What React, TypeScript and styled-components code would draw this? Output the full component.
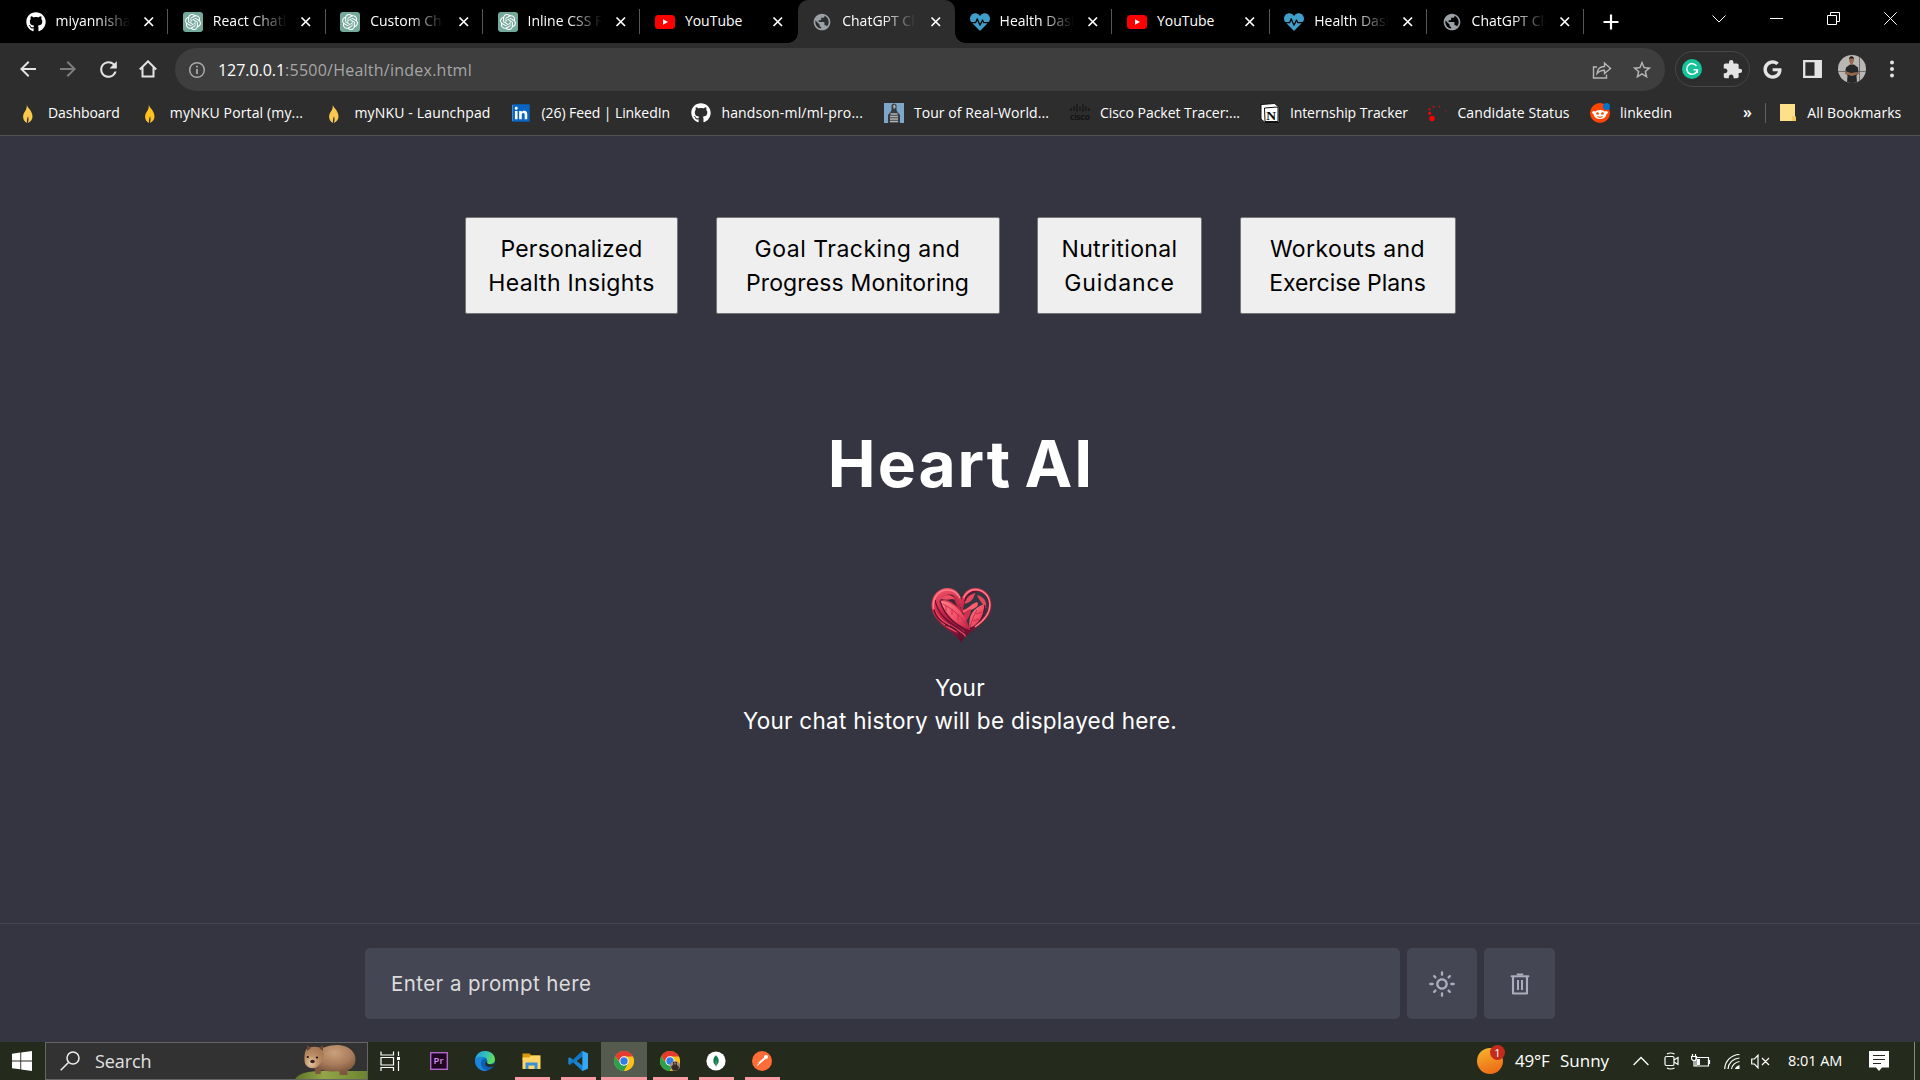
import React from "react";
import styled, { createGlobalStyle, css } from "styled-components";
import { FaGithub, FaHeartbeat, FaGoogle, FaLinkedin } from "react-icons/fa";
import { MdExtension, MdPublic, MdArrowBack, MdArrowForward, MdRefresh, MdStarBorder, MdOutlineLightMode } from "react-icons/md";
import { SiOpenai, SiMongodb } from "react-icons/si";

const Global = createGlobalStyle`
  *, *::before, *::after { box-sizing: border-box; }
  body { margin: 0; background: #343541; overflow: hidden; }
  svg { display: block; flex: none; }
`;
const ui = '"Open Sans", "Noto Sans", sans-serif';
const pageFont = 'Inter, "Open Sans", sans-serif';

const Screen = styled.div`
  width: 1920px; height: 1080px; display: flex; flex-direction: column;
  background: #343541; font-family: ${ui}; overflow: hidden;
`;

/* ---------- tab strip ---------- */
const TabStrip = styled.div`
  height: 43px; background: #000; display: flex; padding-left: 11px; flex: none;
`;
const Tab = styled.div<{ $active?: boolean; $line?: boolean }>`
  position: relative; width: 157.350px; height: 43px; flex: none; display: flex; align-items: center;
  padding: 0 0 0 14.500px; color: #fff; font-size: 14px;
  ${(p) => p.$line && css`
    &::after { content: ""; position: absolute; right: 0; top: 9px; width: 1px; height: 25px; background: #55565a; }
  `}
  ${(p) => p.$active && css`
    background: #2d2d2d; border-radius: 10px 10px 0 0;
    &::before, &::after { content: ""; position: absolute; bottom: 0; width: 10px; height: 10px; }
    &::before { left: -10px; background: radial-gradient(circle at 0 0, #000 9.5px, #2d2d2d 10px); }
    &::after { right: -10px; background: radial-gradient(circle at 100% 0, #000 9.5px, #2d2d2d 10px); }
  `}
`;
const TabTitle = styled.span<{ $fade: boolean }>`
  margin-left: 10px; width: 74px; overflow: hidden; white-space: nowrap; line-height: 20px; margin-top: -1px;
  ${(p) => p.$fade && css`mask-image: linear-gradient(90deg, #000 54%, transparent 100%);`}
`;
const CloseX = styled.span`margin-left: 13.500px; color: #fff;`;
const NewTab = styled.div`width: 54px; display: flex; align-items: center; justify-content: center;`;
const WindowControls = styled.div`margin-left: auto; height: 37px; display: flex; margin-right: 1.500px;`;
const WinBtn = styled.div`width: 57px; display: flex; align-items: center; justify-content: center;`;

const GptTile = styled.span`
  width: 20px; height: 20px; border-radius: 3px; background: #75a99c; color: #fff; flex: none;
  display: flex; align-items: center; justify-content: center;
`;

const Gpt = () => <GptTile><SiOpenai size={16} /></GptTile>;
const YouTube = () => (
  <svg width="20" height="20" viewBox="0 0 20 20"><rect y="3" width="20" height="14" rx="3.5" fill="#f00" /><path d="M8 7.2v5.6l5-2.8z" fill="#fff" /></svg>
);
const Globe = () => <MdPublic size={20} color="#9aa0a6" />;
const Health = () => <FaHeartbeat size={20} color="#3f9fca" />;

type TabInfo = { title: string; icon: React.ReactNode; active?: boolean; line?: boolean };
const tabs: TabInfo[] = [
  { title: "miyannisha", icon: <FaGithub size={20} color="#fff" />, line: true },
  { title: "React Chatbot", icon: <Gpt />, line: true },
  { title: "Custom Chat", icon: <Gpt />, line: true },
  { title: "Inline CSS Fix", icon: <Gpt />, line: true },
  { title: "YouTube", icon: <YouTube /> },
  { title: "ChatGPT Clone", icon: <Globe />, active: true },
  { title: "Health Dashboard", icon: <Health />, line: true },
  { title: "YouTube", icon: <YouTube />, line: true },
  { title: "Health Dashboard", icon: <Health />, line: true },
  { title: "ChatGPT Clone", icon: <Globe />, line: true },
];

/* ---------- toolbar ---------- */
const Toolbar = styled.div`
  height: 53px; background: #2d2d2d; display: flex; align-items: center; padding: 0 8px 1px; flex: none; color: #e3e3e3;
`;
const ToolBtn = styled.div<{ $dim?: boolean }>`
  width: 40px; height: 40px; display: flex; align-items: center; justify-content: center; color: ${(p) => (p.$dim ? "#7d7d7d" : "#e3e3e3")};
`;
const Omnibox = styled.div`
  width: 1490px; height: 43px; border-radius: 22px; background: #3e3e3e; margin: 1px 0 0 7px;
  display: flex; align-items: center; padding: 0 14px 0 13px; color: #a9a9a9;
`;
const Url = styled.div`
  flex: 1; margin-left: 12px; font-size: 16px; letter-spacing: 0.240px; color: #a6a6a6; line-height: 24px;
  b { font-weight: 400; color: #fff; letter-spacing: -0.050px; }
`;
const OmniIcon = styled.span`width: 20px; margin-left: 19px; color: #b7b7b7;`;
const ExtensionPill = styled.div`
  width: 75px; height: 36px; border: 1px solid #474747; border-radius: 18px; margin-left: 10px; margin-right: 2px;
  display: flex; align-items: center; justify-content: space-between; padding: 0 6px;
`;
const Grammarly = styled.span`
  width: 20px; height: 20px; border-radius: 50%; background: #15c39a; display: flex; align-items: center; justify-content: center;
`;

/* ---------- bookmarks ---------- */
const Bookmarks = styled.div`
  height: 40px; background: #2d2d2d; border-bottom: 1px solid #505055; display: flex; align-items: center;
  padding: 0 0 5px 18px; flex: none; color: #fff; font-size: 14px; white-space: nowrap;
`;
const Bookmark = styled.div<{ $w: number; $ls: number }>`
  width: ${(p) => p.$w}px; display: flex; align-items: center; letter-spacing: ${(p) => p.$ls}px; flex: none; line-height: 20px;
  > svg { margin-right: 10px; }
`;
const Overflow = styled.div`width: 22.400px; font-size: 16px; line-height: 20px; font-weight: 600; padding-bottom: 3px;`;
const BarLine = styled.div`width: 1px; height: 20px; background: #606060; margin: 0 14px 0 0;`;

const Flame = ({ c }: { c: string }) => (
  <svg width="20" height="20" viewBox="0 0 20 20">
    <path d="M8.800 0c-.3 2 .5 3.500 2.400 5.800 1.600 2 3.300 4.500 3.300 7.600 0 3-1.500 5-4.700 6.600.9-2.600 1-4.600.2-6.800-.7 2-1.300 3.800-1 6.800C6.300 18.700 4.900 16.400 5.100 13c.2-3 2.300-4.600 3.100-6.800C9 4 8.900 2 8.800 0z" fill={c} />
  </svg>
);
const LinkedIn = () => (
  <svg width="20" height="20" viewBox="0 0 20 20"><rect x="1" y="2" width="16" height="16" fill="#fff" /><FaLinkedin size={20} color="#0a66c2" /></svg>
);
const Mural = () => (
  <svg width="20" height="20" viewBox="0 0 20 20">
    <rect width="20" height="20" fill="#7ea6c6" /><path d="M7.500 2Q10-1 12.500 2v5l1 2 2.500 3v8H4v-8l2.500-3 1-2z" fill="#343c46" />
    <path d="M9 3.500l1.500-1 .5 1.500-1.500 1.500M6.500 11h7M6 13.500h8M6 16h8M6 18.500h8" stroke="#b7b5ad" strokeWidth="1.300" fill="none" />
  </svg>
);
const Cisco = () => (
  <svg width="20" height="20" viewBox="0 0 20 20">
    <path d="M1 5v3M4 3v5M7 1v8M10 4v4M13 1v8M16 3v5M19 5v3" stroke="#151515" strokeWidth="1.200" />
    <text x="0" y="16.500" textLength="20" fontSize="9" fontWeight="700" fontFamily="Open Sans" fill="#151515">cisco</text>
  </svg>
);
const Notion = () => (
  <svg width="20" height="20" viewBox="0 0 20 20">
    <path d="M1 1.500L14.500.5 19 4v15.500H5L1 16z" fill="#fff" stroke="#111" strokeWidth="1" /><path d="M4.500 5L18 4v14.500H5z" fill="#fff" stroke="#111" />
    <text x="6.200" y="16.500" fontSize="13.500" fontWeight="700" fontFamily="Liberation Serif" fill="#000">N</text>
  </svg>
);
const RedDots = () => (
  <svg width="20" height="20" viewBox="0 0 20 20" fill="#f00">
    <circle cx="5" cy="15.500" r="2.700" /><circle cx="2.600" cy="10.300" r="1.500" /><circle cx="2.600" cy="6.300" r="1.100" /><circle cx="6.500" cy="3.800" r=".9" /><circle cx="12.500" cy="3.800" r=".7" /><circle cx="18.500" cy="8" r=".6" />
  </svg>
);
const Reddit = () => (
  <svg width="20" height="20" viewBox="0 0 20 20">
    <circle cx="10" cy="10" r="10" fill="#ff4500" /><ellipse cx="10" cy="11.500" rx="6.300" ry="4.600" fill="#fff" /><circle cx="3.800" cy="9.500" r="1.600" fill="#fff" /><circle cx="16.200" cy="9.500" r="1.600" fill="#fff" />
    <circle cx="7.500" cy="10.500" r="1.300" fill="#ff4500" /><circle cx="12.500" cy="10.500" r="1.300" fill="#ff4500" /><path d="M7.300 13.600q2.700 1.700 5.400 0" stroke="#ff4500" fill="none" /><circle cx="16.500" cy="3.500" r="3.500" fill="#0072c9" />
  </svg>
);
const Folder = () => (
  <svg width="17" height="20" viewBox="0 0 17 20"><path d="M0 1h15v12l1 1v4H0z" fill="#ffe08a" /><path d="M12 18v-5l4 1v4z" fill="#f5c95a" /></svg>
);

const bookmarks: { t: string; w: number; ls: number; i: React.ReactNode }[] = [
  { t: "Dashboard", w: 121.8, ls: -0.06, i: <Flame c="#f9c94e" /> },
  { t: "myNKU Portal (my...", w: 184.7, ls: 0.14, i: <Flame c="#ffc220" /> },
  { t: "myNKU - Launchpad", w: 187, ls: 0.15, i: <Flame c="#f9c94e" /> },
  { t: "(26) Feed | LinkedIn", w: 179.9, ls: -0.08, i: <LinkedIn /> },
  { t: "handson-ml/ml-pro...", w: 192.5, ls: 0.18, i: <FaGithub size={20} /> },
  { t: "Tour of Real-World...", w: 186, ls: 0.08, i: <Mural /> },
  { t: "Cisco Packet Tracer:...", w: 190, ls: -0.03, i: <Cisco /> },
  { t: "Internship Tracker", w: 167.6, ls: -0.08, i: <Notion /> },
  { t: "Candidate Status", w: 162.5, ls: 0.08, i: <RedDots /> },
  { t: "linkedin", w: 153, ls: 0.08, i: <Reddit /> },
];

/* ---------- page ---------- */
const Page = styled.main`
  height: 906px; background: #343541; display: flex; flex-direction: column; align-items: center; padding-top: 81px; font-family: ${pageFont}; color: #fff;
`;
const Features = styled.div`display: flex; gap: 37.500px; padding-left: 0.500px;`;
const Feature = styled.button<{ $w: number }>`
  width: ${(p) => p.$w}px; height: 97px; padding: 1px 0 0; border: 1px solid #767676; border-radius: 2px; background: #efefef; color: #000;
  font: 400 23px/34px ${pageFont}; display: flex; flex-direction: column; align-items: center; justify-content: center;
`;
const Line = styled.span<{ $ls: number }>`letter-spacing: ${(p) => p.$ls}px; white-space: nowrap;`;
const Title = styled.h1`margin: 102px 0 75px; font-size: 64px; line-height: 96px; font-weight: 700; letter-spacing: 2px; word-spacing: -5px; padding-left: 2px;`;
const Message = styled.p`margin: 27px 0 0; font-size: 22.500px; line-height: 33px; text-align: center; letter-spacing: 0.270px;`;
const Composer = styled.div`
  width: 100%; height: 119px; margin-top: auto; border-top: 1px solid #444654; display: flex; justify-content: center; gap: 7px; padding-top: 24px;
`;
const Prompt = styled.textarea`
  width: 1035px; height: 71px; border: 0; border-radius: 5px; background: #444654; resize: none; outline: 0; overflow: hidden; display: block;
  font: 400 20.500px/30px ${pageFont}; letter-spacing: 0.430px; padding: 21px 26px; color: #fff;
  &::placeholder { color: #dcdcdc; opacity: 1; }
`;
const Action = styled.button<{ $w: number }>`
  width: ${(p) => p.$w}px; height: 71px; border: 0; border-radius: 5px; background: #444654; color: #acacbe; display: flex; align-items: center; justify-content: center; padding: 0;
`;

const features: { w: number; lines: [string, number][] }[] = [
  { w: 213, lines: [["Personalized", 0.15], ["Health Insights", 0.3]] },
  { w: 284, lines: [["Goal Tracking and", 0.5], ["Progress Monitoring", 0.15]] },
  { w: 165, lines: [["Nutritional", 0.37], ["Guidance", 0.9]] },
  { w: 216, lines: [["Workouts and", 0.4], ["Exercise Plans", -0.05]] },
];

const HeartBox = styled.div`padding-left: 3px;`;
const Heart = () => (
  <HeartBox><svg width="61" height="57" viewBox="0 0 61 57">
    <defs>
      <linearGradient id="h1" x1="0" y1="0" x2=".3" y2="1"><stop offset="0" stopColor="#f85a6c" /><stop offset=".5" stopColor="#c42246" /><stop offset="1" stopColor="#5c0f2c" /></linearGradient>
      <linearGradient id="h2" x1="0" y1="0" x2="1" y2="1"><stop offset="0" stopColor="#ff8088" /><stop offset=".6" stopColor="#f04a62" /><stop offset="1" stopColor="#b51c42" /></linearGradient>
      <clipPath id="hc"><path d="M30 56C26 45 1 38 .5 18.500.5 8 8 1 16.500 1 24 1 29 6 30.500 13 32 6 37 1 44.500 1 53 1 60.500 8 60.500 18.500 60.500 37 36 43 30 56z" /></clipPath>
    </defs>
    <g clipPath="url(#hc)">
      <rect width="61" height="57" fill="url(#h1)" />
      <path d="M33 16C34 8 39 4.500 46 4.500c7 1 12 6 12 13 0 9-8 17-18 24L31 30z" fill="#343541" />
      <path d="M9 14C13 6 22 5 27 13l3 9-7-5c-5-4-9-5-14-3z" fill="#3d2436" />
      <path d="M10 12c4-6 11-5 15 1l-4-1c-4 1-7 1-11 0z" fill="#f04b62" />
      <path d="M22 9c5 1 7 5 7 13-4-4-5-8-7-13z" fill="#c32b49" />
      <path d="M33.500 17c1-7 7-10 11-11-2 3-1 8-11 11z" fill="#e8485d" />
      <path d="M32 23c6-1 7-6 14-8 4 5-6 8-14 11z" fill="#ff5d6d" />
      <path d="M46 8c7 2 10 6 9 14-2-5-7-8-9-14z" fill="#e8485d" />
      <path d="M38.500 41C37 29 42 21 53 17c1 10-4 20-14.500 24z" fill="url(#h2)" />
      <path d="M32 31c0-6 4-8 8-9 0 5-3 10-6 13z" fill="#d0304e" />
      <path d="M9 14c13 0 24 10 30 29-5 0-22-8-30-29z" fill="url(#h2)" />
      <path d="M4 22c5 12 17 17 29 22l2 6C22 43 7 40 4 22z" fill="#f24f64" />
      <g fill="none" stroke="#65102f" strokeWidth="1.300">
        <path d="M9 14c5 16 16 24 29 30M4 13c3 16 14 22 31 34M3 23c4 14 19 16 30 26M14 38c8 1 14 6 17 14" />
        <path d="M39 42c7-3 14-9 15-24M34 14c1-6 6-10 12-10 7 0 12 6 12 14" />
      </g>
      <path d="M12 17c9 5 20 13 26 25M46 23c-3 5-6 12-7 18M15 19v5M21 22v6M27 27v6M45 27l6-2M42 34l6-2" stroke="#c4264a" strokeWidth=".9" fill="none" />
      <g fill="none" stroke="#ff7d86" strokeWidth="1.500">
        <path d="M2.500 22C1 10 8 3 16.500 3c6 0 10 3 12.500 8M32.500 11C36 4 40 2.500 45 2.800c8 .5 14 7 13.800 15.700 0 9-7 16-15 21.500" />
      </g>
    </g>
  </svg></HeartBox>
);
const Trash = () => (
  <svg width="20" height="22" viewBox="0 0 20 22" fill="none" stroke="#acacbe">
    <path d="M.8 3.300h18.400" strokeWidth="2" /><path d="M6.800 1.500h6.400" strokeWidth="2" /><path d="M3 4v16.500h14V4" strokeWidth="2.100" strokeLinejoin="round" /><path d="M8 7v10M12 7v10" strokeWidth="2" />
  </svg>
);

/* ---------- taskbar ---------- */
const Taskbar = styled.div`height: 38px; background: #242b1c; display: flex; flex: none; color: #fff;`;
const Start = styled.div`width: 45px; display: flex; align-items: center; justify-content: center; padding-right: 1px;`;
const SearchBox = styled.div`
  width: 323px; height: 38px; background: #323232; border: 1px solid #666; display: flex; align-items: center; padding-left: 14px; font-size: 18px; color: #e2e2e2;
  > span { margin-left: 15px; letter-spacing: -0.1px; line-height: 24px; flex: 1; }
`;
const TaskView = styled.div`width: 48px; display: flex; align-items: center; padding-left: 11.500px;`;
const TaskItem = styled.div<{ $run?: boolean; $on?: boolean }>`
  width: 46px; height: 38px; display: flex; align-items: center; justify-content: center; position: relative;
  padding-right: 1px; left: ${(p) => (p.$run ? 1 : 0)}px;
  background: ${(p) => (p.$on ? "#565b4f" : "transparent")};
  ${(p) => p.$run && css`&::after { content: ""; position: absolute; bottom: 0; left: ${p.$on ? 0 : 5.5}px; right: ${p.$on ? 0 : 5.5}px; height: 3px; background: #fb9aa3; }`}
`;
const Tray = styled.div`margin-left: auto; width: 443px; display: flex; align-items: center;`;
const Weather = styled.div`position: relative; width: 26px; height: 26px; border-radius: 50%; background: linear-gradient(160deg, #f3b92e, #f0821e 60%, #ee640f); margin-bottom: 1px;`;
const Badge = styled.span`
  position: absolute; left: 13px; top: -3px; width: 15px; height: 15px; border-radius: 50%; background: #c42b1c; color: #fff; font-size: 11px; line-height: 15px; text-align: center;
`;
const TrayText = styled.span<{ $ml: number; $w: number; $fs: number; $ls?: number }>`
  margin-left: ${(p) => p.$ml}px; width: ${(p) => p.$w}px; font-size: ${(p) => p.$fs}px; letter-spacing: ${(p) => p.$ls || 0}px; white-space: nowrap; line-height: 24px;
`;
const TrayIcon = styled.span<{ $ml: number }>`margin-left: ${(p) => p.$ml}px;`;

const Wombat = () => (
  <svg width="72" height="36" viewBox="0 0 72 36">
    <defs>
      <radialGradient id="wb" cx=".45" cy=".3" r=".75"><stop offset="0" stopColor="#c9a07c" /><stop offset=".6" stopColor="#a87c5c" /><stop offset="1" stopColor="#7d563d" /></radialGradient>
      <radialGradient id="wf" cx=".35" cy=".75" r=".7"><stop offset="0" stopColor="#e8cba8" /><stop offset=".5" stopColor="#bd9068" /><stop offset="1" stopColor="#a87a56" /></radialGradient>
      <linearGradient id="gr" x1="0" y1="0" x2="1" y2="0"><stop offset="0" stopColor="#5d7428" /><stop offset=".4" stopColor="#93a548" /><stop offset="1" stopColor="#6c8430" /></linearGradient>
    </defs>
    <path d="M0 36c4-6 14-8 26-8h46v8z" fill="url(#gr)" />
    <path d="M19 22l1.500 9h5l1-5 17-1 1.500 7h8l-1-3 4-6z" fill="#80573e" />
    <path d="M24 7c6-4 13-5 20-5 11 1 17 8 16.500 15-.5 7-6 11-12 11-9 0-18 2-26-3z" fill="url(#wb)" />
    <path d="M11.500 6c4-3 12-3 15.500 0 4 6 0 14-5 18-6 3-12 0-12.500-6-.2-5 0-9 2-12z" fill="url(#wf)" />
    <path d="M12 8V2l4 3zM28 8V2l-4 3z" fill="#6b4734" />
    <ellipse cx="17.500" cy="18.500" rx="2.300" ry="1.700" fill="#38251e" /><circle cx="12.800" cy="14" r="1.100" fill="#20130f" /><circle cx="22" cy="14.500" r="1.100" fill="#20130f" />
  </svg>
);
const Edge = () => (
  <svg width="20" height="20" viewBox="0 0 20 20">
    <defs><linearGradient id="e1" x1="0" y1="0" x2="1" y2=".3"><stop offset="0" stopColor="#1f9ce4" /><stop offset=".6" stopColor="#35c1b8" /><stop offset="1" stopColor="#5fdc5a" /></linearGradient></defs>
    <circle cx="10" cy="10" r="10" fill="#0f5fb4" />
    <path d="M0 9C1 3 5 0 10 0c6 0 10 4 10 8.500 0 3-2.500 4.500-5 4.500-2 0-3.500-.7-3-1.500C13 10 12 7 8.500 6 5 5.500 1 7 0 9z" fill="url(#e1)" />
    <path d="M0 9c2-4 8-4 10-1.500C7 7.500 5.500 10 6 13c.5 4 4 6.500 7 6.500C6 21.500-.5 16 0 9z" fill="#1b85dc" />
    <path d="M12 11.500c-.3 1.800 4 2.700 6.800 1.200l.7.300c0 1-1 2-2 2.500-4 1.300-7.500-.5-7.300-3 .3-2 2-2.500 1.800-1z" fill="#242b1c" />
  </svg>
);
const Explorer = () => (
  <svg width="19" height="18" viewBox="0 0 19 18"><path d="M.5 1.500h7l2 2H18V8H.5z" fill="#d99b0d" /><path d="M.5 5.500h6.500l2-2H18.500V17H.5z" fill="#ffd565" /><path d="M3.500 17v-6.500h12V17h-3v-3.500h-6V17z" fill="#3a8fd9" /></svg>
);
const Code = () => (
  <svg width="20" height="20" viewBox="0 0 20 20"><path d="M14.300 0L5 8.700 1.800 6.200.3 7v6l1.500.8L5 11.300 14.300 20 20 17.500v-15z" fill="#1b84cf" /><path d="M14.500 5.500L8.500 10l6 4.500z" fill="#242b1c" /><path d="M14.500 0L20 2.500v15L14.500 20z" fill="#35a8f1" /><path d="M.3 13L14.300 0v5L2 14z" fill="#0e72bd" opacity=".7" /></svg>
);
const Chrome = ({ face }: { face?: boolean }) => (
  <svg width="20" height="20" viewBox="0 0 20 20">
    <circle cx="10" cy="10" r="10" fill="#fbc116" /><path d="M1.340 5A10 10 0 0 0 10 20l4.300-7.500L10 10H4.200z" fill="#2aa14b" /><path d="M10 5.400h8.900A10 10 0 0 1 10 20l4-7.500z" fill="#fbc116" /><path d="M1.340 5A10 10 0 0 1 18.900 5.400H10L6 12z" fill="#e33b2e" />
    <circle cx="10" cy="10" r="4.700" fill="#fff" /><circle cx="10" cy="10" r="3.700" fill="#327ce8" />
    {face && <g><circle cx="15" cy="15" r="5" fill="#a58e78" /><path d="M13 11h4v3l2 2-1 3.500h-5L11 16l2-2z" fill="#322b28" /><circle cx="15" cy="12.500" r="1.300" fill="#8e6650" /></g>}
  </svg>
);

export default function App() {
  return (
    <Screen>
      <Global />
      <TabStrip>
        {tabs.map((t, i) => (
          <Tab key={i} $active={t.active} $line={t.line}>
            {t.icon}
            <TabTitle $fade={t.title !== "YouTube"}>{t.title}</TabTitle>
            <CloseX><svg width="12" height="12" viewBox="0 0 12 12"><path d="M1.500 1.500l8.500 8.500M10 1.500L1.500 10" stroke="#fff" strokeWidth="1.700" /></svg></CloseX>
          </Tab>
        ))}
        <NewTab><svg width="16" height="16" viewBox="0 0 16 16"><path d="M8 .5v15M.5 8h15" stroke="#fff" strokeWidth="2.200" /></svg></NewTab>
        <WindowControls>
          <WinBtn><svg width="14" height="8" viewBox="0 0 14 8"><path d="M.5.5L7 7 13.500.5" stroke="#fff" fill="none" /></svg></WinBtn>
          <WinBtn><svg width="13" height="13" viewBox="0 0 13 13"><path d="M0 6.500h13" stroke="#fff" /></svg></WinBtn>
          <WinBtn><svg width="13" height="13" viewBox="0 0 13 13"><path d="M.5 3.500h9v9h-9zM3.500 3.500v-3h9v9h-3" stroke="#fff" fill="none" /></svg></WinBtn>
          <WinBtn><svg width="13" height="13" viewBox="0 0 13 13"><path d="M.3.3l12.400 12.400M12.700.3L.3 12.700" stroke="#fff" /></svg></WinBtn>
        </WindowControls>
      </TabStrip>

      <Toolbar>
        <ToolBtn><MdArrowBack size={24} /></ToolBtn>
        <ToolBtn $dim><MdArrowForward size={24} /></ToolBtn>
        <ToolBtn><MdRefresh size={25} /></ToolBtn>
        <ToolBtn><svg width="18" height="18" viewBox="0 0 18 18"><path d="M.8 9.500L9 1.300 17.200 9.500M3.500 7.500v9h11v-9" stroke="#e3e3e3" strokeWidth="2" fill="none" /></svg></ToolBtn>
        <Omnibox>
          <svg width="18" height="18" viewBox="0 0 18 18"><circle cx="9" cy="9" r="7.300" stroke="#a9a9a9" strokeWidth="1.500" fill="none" /><path d="M9 8v5M9 4.800v1.700" stroke="#a9a9a9" strokeWidth="1.800" /></svg>
          <Url><b>127.0.0.1</b>:5500/Health/index.html</Url>
          <OmniIcon><svg width="20" height="18" viewBox="0 0 20 18"><path d="M5 6H1.500v11h13v-3.500M5 12.500C5.500 8 8.500 5.500 12.500 5.500V2L18.500 7.500l-6 5V9.200C9.500 9.200 7 10 5 12.500z" stroke="#b7b7b7" strokeWidth="1.400" fill="none" /></svg></OmniIcon>
          <OmniIcon><MdStarBorder size={22} /></OmniIcon>
        </Omnibox>
        <ExtensionPill>
          <Grammarly><svg width="14" height="14" viewBox="0 0 14 14"><path d="M11.500 4A5.300 5.300 0 1 0 12.300 7.800H8.500M12.300 7.800V11" stroke="#fff" strokeWidth="1.500" fill="none" /></svg></Grammarly>
          <MdExtension size={21} />
        </ExtensionPill>
        <ToolBtn><FaGoogle size={19} /></ToolBtn>
        <ToolBtn><svg width="19" height="18" viewBox="0 0 19 18"><path d="M1.200 1.200h16.600v15.600H1.200z" stroke="#e3e3e3" strokeWidth="2.300" fill="none" /><path d="M11.500 1h6.500v16h-6.500z" fill="#e3e3e3" /></svg></ToolBtn>
        <ToolBtn>
          <svg width="28" height="28" viewBox="0 0 28 28">
            <defs><clipPath id="av"><circle cx="14" cy="14" r="14" /></clipPath></defs>
            <g clipPath="url(#av)"><rect width="28" height="28" fill="#b9b7b3" /><path d="M0 16.500h28M21.500 0v28" stroke="#5d5a58" strokeWidth=".8" /><path d="M8 12.500l4-3h4l4 3 .5 6-2 2 .5 7.500H9l.5-8-2.500-2z" fill="#25272a" /><path d="M7 16l6 2 6.500-1 1 2-6.500 2-7-2z" fill="#96674b" /><ellipse cx="13.500" cy="5" rx="2.400" ry="3.200" fill="#9a6c52" /><path d="M11 4.500c0-4.500 5-4.500 5 0l-1-1h-3z" fill="#1d1a18" /><path d="M12.300 7.500h2.500v2.500h-2.500z" fill="#96674b" /></g>
          </svg>
        </ToolBtn>
        <ToolBtn><svg width="6" height="18" viewBox="0 0 6 18" fill="#e3e3e3"><circle cx="3" cy="2.500" r="2" /><circle cx="3" cy="9" r="2" /><circle cx="3" cy="15.500" r="2" /></svg></ToolBtn>
      </Toolbar>

      <Bookmarks>
        {bookmarks.map((b) => <Bookmark key={b.t} $w={b.w} $ls={b.ls}>{b.i}{b.t}</Bookmark>)}
        <Overflow>»</Overflow>
        <BarLine />
        <Bookmark $w={125} $ls={0.05}><Folder />All Bookmarks</Bookmark>
      </Bookmarks>

      <Page>
        <Features>
          {features.map((f) => (
            <Feature key={f.w} $w={f.w}>{f.lines.map(([t, ls]) => <Line key={t} $ls={ls}>{t}</Line>)}</Feature>
          ))}
        </Features>
        <Title>Heart AI</Title>
        <Heart />
        <Message>Your<br />Your chat history will be displayed here.</Message>
        <Composer>
          <Prompt placeholder="Enter a prompt here" />
          <Action $w={70}><MdOutlineLightMode size={28} /></Action>
          <Action $w={71}><Trash /></Action>
        </Composer>
      </Page>

      <Taskbar>
        <Start><svg width="20" height="20" viewBox="0 0 20 20" fill="#fff"><path d="M0 2.800L8.300 1.600v7.900H0zM9.200 1.500L20 0v9.500H9.200zM0 10.400h8.300v7.900L0 17.200zM9.200 10.400H20V20L9.200 18.500z" /></svg></Start>
        <SearchBox>
          <svg width="20" height="20" viewBox="0 0 20 20"><circle cx="13" cy="7" r="6" stroke="#eee" strokeWidth="1.500" fill="none" /><path d="M8.500 11.500L.7 19.300" stroke="#eee" strokeWidth="1.500" /></svg>
          <span>Search</span>
          <Wombat />
        </SearchBox>
        <TaskView><svg width="22" height="20" viewBox="0 0 22 20" fill="none" stroke="#fff" strokeWidth="1.200"><path d="M1 .5v3.500h12.500V.5M1 6.500h12.500v7.500H1zM1 20v-3.500h12.500V20M18.500.5v4.500M18.500 10v10" /><path d="M18.500 6v3" strokeWidth="3" /></svg></TaskView>
        <TaskItem><svg width="18" height="18" viewBox="0 0 18 18"><rect x=".7" y=".7" width="16.600" height="16.600" fill="#1f0520" stroke="#b366cf" strokeWidth="1.400" /><text x="3.600" y="12" fontSize="9.500" fontWeight="600" fontFamily="Open Sans" fill="#d88cf0">Pr</text></svg></TaskItem>
        <TaskItem><Edge /></TaskItem>
        <TaskItem $run><Explorer /></TaskItem>
        <TaskItem $run><Code /></TaskItem>
        <TaskItem $run $on><Chrome /></TaskItem>
        <TaskItem $run><Chrome face /></TaskItem>
        <TaskItem $run><svg width="20" height="20" viewBox="0 0 20 20"><circle cx="10" cy="10" r="9.600" fill="#fff" /><g transform="translate(4 4)"><SiMongodb size={12} color="#12794b" /></g></svg></TaskItem>
        <TaskItem $run><svg width="20" height="20" viewBox="0 0 20 20"><circle cx="10" cy="10" r="10" fill="#ff6c37" /><path d="M5 15.500l1-3.500 6-5.500 1.500 1.500L7.500 13z" fill="#fff" /><circle cx="14" cy="6" r="2" fill="#fff" /><path d="M6 12l1.500 1.500" stroke="#ff6c37" strokeWidth=".7" /></svg></TaskItem>
        <Tray>
          <Weather><Badge>1</Badge></Weather>
          <TrayText $ml={12} $w={45} $fs={17} $ls={-0.2}>49°F</TrayText>
          <TrayText $ml={0} $w={73} $fs={17}>Sunny</TrayText>
          <TrayIcon $ml={0}><svg width="16" height="10" viewBox="0 0 16 10"><path d="M.6 9L8 1.500 15.400 9" stroke="#fff" strokeWidth="1.300" fill="none" /></svg></TrayIcon>
          <TrayIcon $ml={15}><svg width="15" height="18" viewBox="0 0 15 18" fill="none" stroke="#fff" strokeWidth="1.200"><rect x="1" y="4.500" width="9" height="9" rx="1.500" /><path d="M10 8l4-2.500v7L10 10M3 2q3.500-2 7.500 0M3 16q3.500 2 7.500 0" /></svg></TrayIcon>
          <TrayIcon $ml={12}><svg width="20" height="16" viewBox="0 0 20 16" fill="none" stroke="#fff" strokeWidth="1.200"><path d="M5 4.500h12.500v8.500H5zM18.500 7v4M1.500 1v2.500M4.500 1v2.500M.5 3.500h5v2.500l-1.500 1.500H2L.5 6zM3 7.500V13h2" /><path d="M6 6h3v6H6z" fill="#fff" stroke="none" /></svg></TrayIcon>
          <TrayIcon $ml={13}><svg width="16" height="17" viewBox="0 0 16 17" fill="none" stroke="#fff" strokeWidth="1.200"><path d="M.7 16C1 8 7 1.800 15.500 1.500M4 16C4.500 10 9 5.500 15.500 5M7.500 16c.5-3.500 3.500-7 8-7.500" /><path d="M11 16c.3-1.500 2-3.500 4.500-4v4z" stroke="none" fill="#fff" /></svg></TrayIcon>
          <TrayIcon $ml={11}><svg width="19" height="15" viewBox="0 0 19 15" fill="none" stroke="#fff" strokeWidth="1.200"><path d="M.7 5h2.800L7 1.200v12.600L3.500 10H.7zM11 4l7 7M18 4l-7 7" /></svg></TrayIcon>
          <TrayText $ml={18} $w={81} $fs={14.5} $ls={-0.05}>8:01 AM</TrayText>
          <TrayIcon $ml={0}><svg width="20" height="20" viewBox="0 0 20 20"><path d="M0 0h20v16.500h-7L10 20l-3-3.500H0z" fill="#fff" /><path d="M4 4.500h12M4 8.500h12M4 12.500h8" stroke="#242b1c" strokeWidth="1.200" /></svg></TrayIcon>
          <TrayIcon $ml={25}><svg width="1" height="38"><rect width="1" height="38" fill="#868a80" /></svg></TrayIcon>
        </Tray>
      </Taskbar>
    </Screen>
  );
}
